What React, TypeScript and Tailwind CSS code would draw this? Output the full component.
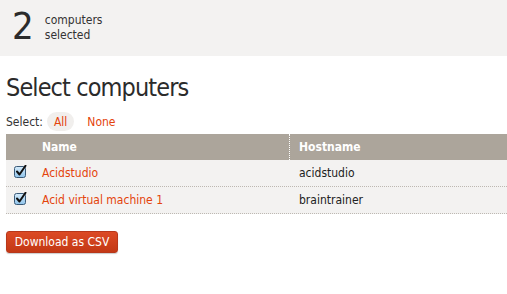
import React from "react";

function Check() {
  return (
    <svg width="13" height="13" viewBox="0 0 13 13" className="block">
      <defs>
        <linearGradient id="cb" x1="0" y1="0" x2="0" y2="1">
          <stop offset="0" stopColor="#d6ecfb" />
          <stop offset="1" stopColor="#8fc3ea" />
        </linearGradient>
      </defs>
      <rect x="0.5" y="1.5" width="11" height="11" rx="2" fill="url(#cb)" stroke="#3a5a78" />
      <path d="M3 6.5 L5.5 9.5 L11.5 0.8" fill="none" stroke="#111" strokeWidth="2" strokeLinecap="round" strokeLinejoin="round" />
    </svg>
  );
}

const rows = [
  { name: "Acidstudio", host: "acidstudio" },
  { name: "Acid virtual machine 1", host: "braintrainer" },
];

export default function App() {
  return (
    <div
      className="w-[507px] h-[294px] bg-white overflow-hidden text-[#2d2d2d]"
      style={{ fontFamily: '"DejaVu Sans Condensed", "DejaVu Sans", sans-serif' }}
    >
      <div className="h-[56px] bg-[#f3f2f1] flex items-start pl-[12px] pt-[4px]">
        <div className="text-[38px] leading-[44px] text-[#2b2b2b]">2</div>
        <div className="ml-[11px] mt-[9px] text-[12px] leading-[15px] text-[#333]">
          <div>computers</div>
          <div>selected</div>
        </div>
      </div>
      <div className="pl-[6px]">
        <h1 className="text-[25px] leading-[32px] mt-[16px] tracking-[-0.9px] text-[#2b2b2b]">Select computers</h1>
        <div className="flex items-center mt-[8px] text-[12px] h-[19px]">
          <span className="text-[#333]">Select:</span>
          <span className="ml-[4px] h-[19px] px-[7px] rounded-full bg-[#f1efed] text-[#e4440c] flex items-center">All</span>
          <span className="ml-[13px] text-[#e4440c]">None</span>
        </div>
        <div className="mt-[3px] text-[12px]">
          <div className="h-[26px] bg-[#aca59b] flex items-center font-bold text-white">
            <div className="w-[36px]" />
            <div className="w-[247px] h-full flex items-center">Name</div>
            <div className="h-full flex items-center pl-[9px] border-l border-dotted border-white">Hostname</div>
          </div>
          {rows.map((r) => (
            <div key={r.name} className="h-[27px] bg-[#f3f2f1] flex items-center border-b border-dotted border-[#bdb8b2]">
              <div className="w-[36px] pl-[8px] -mt-[4px]">
                <Check />
              </div>
              <div className="w-[248px] text-[#e4440c]">{r.name}</div>
              <div className="pl-[9px] text-[#222]">{r.host}</div>
            </div>
          ))}
        </div>
        <button className="mt-[17px] w-[112px] h-[22px] rounded-[3px] bg-gradient-to-b from-[#dc4a24] to-[#c33815] border border-[#b8371a] text-white text-[12px] flex items-center justify-center shadow-[0_1px_1px_rgba(0,0,0,0.2)]">
          Download as CSV
        </button>
      </div>
    </div>
  );
}
